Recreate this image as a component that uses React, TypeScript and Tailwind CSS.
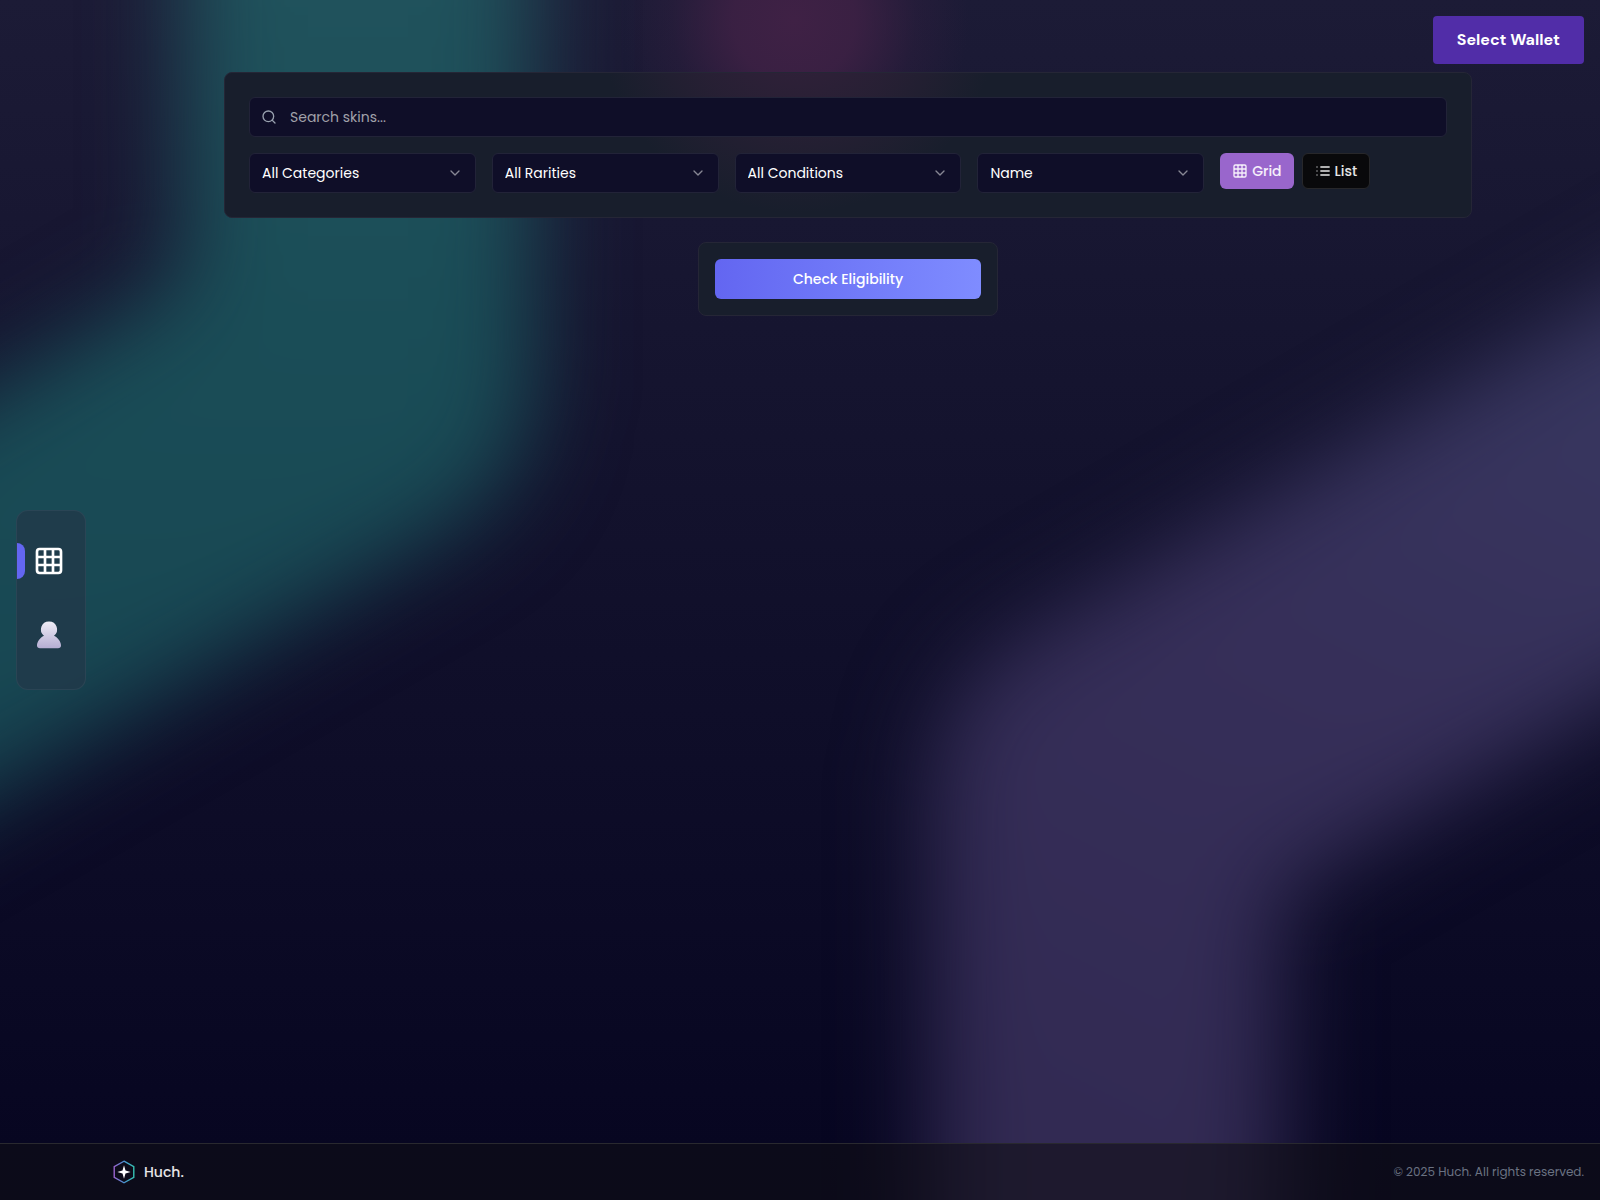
import { ChevronDown, Search } from 'lucide-react'

const filters = [
  { id: 'category', label: 'Category', options: ['All Categories'] },
  { id: 'rarity', label: 'Rarity', options: ['All Rarities'] },
  { id: 'condition', label: 'Condition', options: ['All Conditions'] },
  { id: 'sort', label: 'Sort by', options: ['Name', 'Price'] },
]

function GridIcon({ className }: { className: string }) {
  return (
    <svg
      viewBox="0 0 24 24"
      fill="none"
      stroke="currentColor"
      strokeWidth="2"
      strokeLinejoin="round"
      className={className}
    >
      <rect x="3" y="3" width="18" height="18" rx="2" />
      <path d="M3 9h18M3 15h18M9 3v18M15 3v18" />
    </svg>
  )
}

function ListIcon({ className }: { className: string }) {
  return (
    <svg viewBox="0 0 24 24" fill="none" stroke="currentColor" strokeWidth="2.5" className={className}>
      <path d="M8 6h14M8 12h14M8 18h14" />
      <path d="M2 6h2M2 12h2M2 18h2" strokeOpacity="0.6" />
    </svg>
  )
}

function UserIcon({ className }: { className: string }) {
  return (
    <svg viewBox="0 0 28 28" className={className}>
      <defs>
        <linearGradient id="user-fill" x1="0" y1="0" x2="0" y2="1">
          <stop offset="0" stopColor="#efedf6" />
          <stop offset="1" stopColor="#b5add3" />
        </linearGradient>
      </defs>
      <path
        d="M14 0.5a8 8 0 0 1 5 14.3c4 1.8 7 6.2 7 9.7 0 1.8-1.2 2.8-3 2.8H5c-1.8 0-3-1-3-2.8 0-3.5 3-7.9 7-9.7A8 8 0 0 1 14 0.5z"
        fill="url(#user-fill)"
      />
    </svg>
  )
}

function Logo() {
  return (
    <svg viewBox="0 0 24 26" fill="none" className="h-6 w-6">
      <defs>
        <linearGradient id="logo-edge" x1="0" y1="0" x2="1" y2="0">
          <stop offset="0" stopColor="#9b63cf" />
          <stop offset="0.5" stopColor="#4a90d0" />
          <stop offset="1" stopColor="#35c3b4" />
        </linearGradient>
      </defs>
      <path
        d="M12 1.3 22.6 7.2v11.6L12 24.7 1.4 18.8V7.2z"
        stroke="url(#logo-edge)"
        strokeWidth="1.5"
      />
      <path
        d="M12 5.8 13.6 11.4 19.2 13 13.6 14.6 12 20.2 10.4 14.6 4.8 13 10.4 11.4z"
        fill="#fff"
      />
    </svg>
  )
}

function Backdrop() {
  return (
    <svg
      viewBox="0 0 1600 1200"
      preserveAspectRatio="none"
      aria-hidden="true"
      className="absolute inset-0 -z-10 h-full w-full"
    >
      <defs>
        <linearGradient id="night" x1="0" y1="0" x2="0" y2="1">
          <stop offset="0" stopColor="#1c1b36" />
          <stop offset="1" stopColor="#060520" />
        </linearGradient>
        <radialGradient id="rose">
          <stop offset="0" stopColor="#3f2145" />
          <stop offset="0.35" stopColor="#3f2145" stopOpacity="0.85" />
          <stop offset="0.7" stopColor="#3f2145" stopOpacity="0.25" />
          <stop offset="1" stopColor="#3f2145" stopOpacity="0" />
        </radialGradient>
        <linearGradient id="teal" gradientUnits="userSpaceOnUse" x1="0" y1="0" x2="0" y2="800">
          <stop offset="0" stopColor="#20525c" />
          <stop offset="0.4" stopColor="#1a4d57" />
          <stop offset="1" stopColor="#174551" />
        </linearGradient>
        <linearGradient id="violet" gradientUnits="userSpaceOnUse" x1="1600" y1="400" x2="1200" y2="1200">
          <stop offset="0" stopColor="#37365f" />
          <stop offset="0.4" stopColor="#362f59" />
          <stop offset="1" stopColor="#322a53" />
        </linearGradient>
        <filter
          id="soft"
          x="-400"
          y="-400"
          width="2400"
          height="2000"
          filterUnits="userSpaceOnUse"
          colorInterpolationFilters="sRGB"
        >
          <feGaussianBlur stdDeviation="46" />
        </filter>
      </defs>
      <rect width="1600" height="1200" fill="url(#night)" />
      <circle cx="794" cy="20" r="175" fill="url(#rose)" />
      <g fill="none" strokeWidth="350" strokeLinejoin="round" filter="url(#soft)">
        <path d="M358-300V380L-300 760" stroke="url(#teal)" />
        <path d="M1106 1500V792L2000 276" stroke="url(#violet)" />
      </g>
    </svg>
  )
}

export default function App() {
  return (
    <div className="relative isolate flex min-h-screen flex-col overflow-hidden bg-[#060520] font-['Poppins','Inter',sans-serif] text-sm text-white">
      <Backdrop />

      {/* Wallet */}
      <header className="flex justify-end px-4 pt-4">
        <button
          type="button"
          className="h-12 rounded bg-[#512da8] px-6 font-['DM_Sans','Inter',sans-serif] text-base font-bold"
        >
          Select Wallet
        </button>
      </header>

      {/* Side navigation */}
      <nav className="absolute top-[510px] left-4 flex h-[180px] w-[70px] flex-col items-center overflow-hidden rounded-xl border border-white/5 bg-[#213a4a]/85 pt-8 pr-1">
        <span className="absolute top-8 left-0 h-9 w-2 rounded-r-lg bg-[#6366f1]" />
        <a href="#grid" aria-label="Skins" className="flex h-9 items-center">
          <GridIcon className="h-8 w-8" />
        </a>
        <a href="#profile" aria-label="Profile" className="mt-9 flex h-10 items-center">
          <UserIcon className="h-7 w-7" />
        </a>
      </nav>

      <main className="mt-2 flex flex-1 flex-col items-center gap-6 pr-32 pl-56">
        {/* Filters */}
        <section className="flex w-full flex-col gap-4 rounded-lg border border-[#252636] bg-[#181e2c] bg-[radial-gradient(circle_200px_at_46%_-60px,#36213c_0%,#36213c80_55%,#36213c00_100%)] p-6">
          <div className="relative">
            <Search className="absolute top-3 left-3 h-4 w-4 text-gray-400" />
            <input
              type="search"
              aria-label="Search skins"
              placeholder="Search skins..."
              className="h-10 w-full rounded-md border border-[#222338] bg-[#0f0e28] pr-3 pl-10 placeholder:text-[#a1a1aa]"
            />
          </div>
          <div className="grid grid-cols-5 gap-4">
            {filters.map((filter) => (
              <div key={filter.id} className="relative">
                <select
                  id={filter.id}
                  aria-label={filter.label}
                  className="h-10 w-full appearance-none rounded-md border border-[#222338] bg-[#0f0e28] px-3"
                >
                  {filter.options.map((option) => (
                    <option key={option}>{option}</option>
                  ))}
                </select>
                <div className="pointer-events-none absolute inset-y-0 right-0 flex items-center border border-transparent pr-3">
                  <ChevronDown className="h-4 w-4 text-white/50" />
                </div>
              </div>
            ))}
            <div className="flex items-start gap-2 font-medium">
              <button type="button" className="flex h-9 items-center gap-1 rounded-md bg-[#9966cc] px-3 text-white/90">
                <GridIcon className="h-4 w-4" />
                Grid
              </button>
              <button
                type="button"
                className="flex h-9 items-center gap-1 rounded-md border border-[#27272a] bg-[#09090b] px-3 text-white/90"
              >
                <ListIcon className="h-4 w-4" />
                List
              </button>
            </div>
          </div>
        </section>

        {/* Eligibility */}
        <section className="w-[300px] rounded-lg border border-[#252636] bg-[#181e2c] p-4">
          <button
            type="button"
            className="h-10 w-full rounded-md bg-linear-to-r from-[#6366f1] to-[#7f8cff] font-medium"
          >
            Check Eligibility
          </button>
        </section>
      </main>

      <footer className="flex h-[57px] items-center justify-between border-t border-[#29292f] bg-[#110f16]/60 pr-4 pl-28">
        <div className="flex items-center gap-2 font-medium text-white/90">
          <Logo />
          Huch.
        </div>
        <p className="text-xs text-gray-500">© 2025 Huch. All rights reserved.</p>
      </footer>
    </div>
  )
}
